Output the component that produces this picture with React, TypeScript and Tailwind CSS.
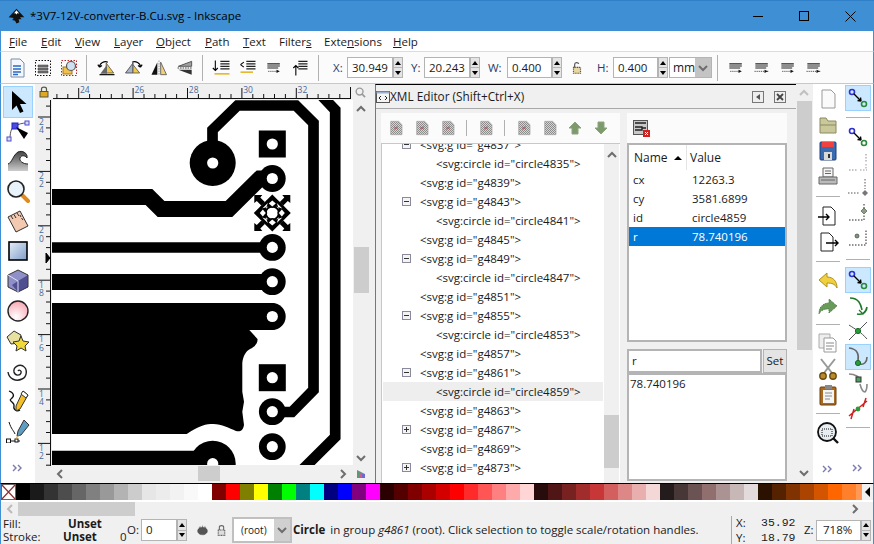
import type { ReactNode } from "react";

function Ico({ children, size = 24 }: { children: ReactNode; size?: number }) {
  return (
    <svg width={size} height={size} viewBox="0 0 24 24" fill="none" className="shrink-0">
      {children}
    </svg>
  );
}

function Sep() {
  return <div className="mx-[5px] h-[26px] w-px shrink-0 bg-[#b0b0b0]" />;
}

function HSep({ cls = "my-[6px]" }: { cls?: string }) {
  return <div className={`${cls} h-px w-[24px] shrink-0 bg-[#b0b0b0]`} />;
}

function Spin({ h = "h-[21px]" }: { h?: string }) {
  return (
    <div className={`flex ${h} w-[10px] shrink-0 flex-col border border-[#b4b4b4] bg-[#e4e4e4]`}>
      <div className="flex flex-1 items-center justify-center border-b border-[#b4b4b4]">
        <div className="h-0 w-0 border-x-[3px] border-b-[4px] border-x-transparent border-b-black" />
      </div>
      <div className="flex flex-1 items-center justify-center">
        <div className="h-0 w-0 border-x-[3px] border-t-[4px] border-x-transparent border-t-black" />
      </div>
    </div>
  );
}

function Field({ label, value, labelCls, inputCls }: { label: string; value: string; labelCls: string; inputCls: string }) {
  return (
    <div className="flex items-center">
      <span className={`${labelCls} text-[#2b3a67]`}>{label}</span>
      <div className={`${inputCls} flex h-[21px] items-center border border-[#b4b4b4] bg-white pl-[4px]`}>{value}</div>
      <Spin />
    </div>
  );
}

function Chevron({ dir, color = "#6e6e6e" }: { dir: "up" | "down" | "left" | "right"; color?: string }) {
  const d = {
    up: "M1 7 L5 3 L9 7",
    down: "M1 3 L5 7 L9 3",
    left: "M7 1 L3 5 L7 9",
    right: "M3 1 L7 5 L3 9",
  }[dir];
  return (
    <svg width="10" height="10" viewBox="0 0 10 10" className="shrink-0">
      <path d={d} fill="none" stroke={color} strokeWidth="2" />
    </svg>
  );
}

function More() {
  return (
    <svg width="12" height="8" viewBox="0 0 12 8">
      <path d="M1 1 L4 4 L1 7 M6 1 L9 4 L6 7" fill="none" stroke="#7a7ab0" strokeWidth="1.4" />
    </svg>
  );
}

/* ---- toolbox drawings ---- */
const toolIcons: ReactNode[] = [
  <path key="a" d="M6 1 V20 L10.5 15.5 L14 23 L17.5 21.5 L14 14 L20.5 14 Z" fill="#000" />,
  <g key="b">
    <path d="M4 20 C4 12 6 8 9 7 C13 5 16 4 21 4" fill="none" stroke="#555" />
    <rect x="6" y="4" width="6" height="6" fill="#4a4ae0" stroke="#2222c0" />
    <rect x="19" y="2" width="4" height="4" fill="#ddd" stroke="#4a4ae0" />
    <rect x="1" y="18" width="4" height="4" fill="#ddd" stroke="#4a4ae0" />
    <path d="M10 8 L22 14 L18 20 Z" fill="#000" />
  </g>,
  <g key="c">
    <defs>
      <linearGradient id="twk" x1="0" y1="0" x2="0" y2="1">
        <stop offset="0" stopColor="#444" />
        <stop offset="1" stopColor="#ccc" />
      </linearGradient>
    </defs>
    <path d="M2 22 V15 C6 14 7 6 12 3 C16 1 22 4 21 9 C19 6 15 6 14 9 C13 12 17 15 22 15 V22 Z" fill="url(#twk)" />
    <path d="M2 15 C6 14 7 6 12 3 C16 1 22 4 21 9 C19 6 15 6 14 9 C13 12 17 15 22 15" fill="none" stroke="#222" />
  </g>,
  <g key="d">
    <path d="M15 15 L22 22" stroke="#e08a1c" strokeWidth="4" strokeLinecap="round" />
    <circle cx="10" cy="10" r="8" fill="#e8f2fa" stroke="#222" strokeWidth="1.6" />
  </g>,
  <g key="e">
    <path d="M2 8 L14 2 L22 17 L10 23 Z" fill="#f3c9b0" stroke="#333" />
    <path d="M5 7 L7 10 M8 5.5 L10 9 M11 4 L13 7 M14 6 L15 8 M15.5 9 L17 11" stroke="#333" />
  </g>,
  <g key="f">
    <defs>
      <linearGradient id="rct" x1="0" y1="0" x2="1" y2="1">
        <stop offset="0" stopColor="#e6eef8" />
        <stop offset="1" stopColor="#7f9dc8" />
      </linearGradient>
    </defs>
    <rect x="3" y="3" width="18" height="18" fill="url(#rct)" stroke="#000" strokeWidth="1.6" />
  </g>,
  <g key="g">
    <path d="M12 1 L22 6 V18 L12 23 L2 18 V6 Z" fill="#9090c8" stroke="#333" />
    <path d="M12 12 L22 6 V18 L12 23 L6 16 Z" fill="#33337a" opacity=".7" />
    <path d="M2 6 L12 12 V23" fill="none" stroke="#dfdff5" />
  </g>,
  <g key="h">
    <defs>
      <radialGradient id="crc" cx="0.4" cy="0.8" r="0.8">
        <stop offset="0" stopColor="#fff" />
        <stop offset="1" stopColor="#f7a8b4" />
      </radialGradient>
    </defs>
    <circle cx="12" cy="12" r="10" fill="url(#crc)" stroke="#222" strokeWidth="1.4" />
  </g>,
  <g key="i">
    <path d="M1 8 L8 2 L15 6 L13 14 L5 15 Z" fill="#e8e0a0" stroke="#333" />
    <path d="M15 7 L17 12 L23 13 L19 17 L20 22 L15 19 L10 22 L11 17 L7 13 L13 12 Z" fill="#f0d838" stroke="#333" />
  </g>,
  <path key="j" d="M12 12 C13 10 16 12 15 14 C14 17 9 17 8 13 C7 8 13 5 17 7 C22 10 21 18 16 20 C10 23 3 20 2 13" fill="none" stroke="#222" strokeWidth="1.4" />,
  <g key="k">
    <path d="M3 2 C8 4 9 7 5 10 C2 12 9 13 8 17 C7 21 11 23 14 21" fill="none" stroke="#111" strokeWidth="1.3" />
    <path d="M17 2 L22 6 L14 20 L10 22 L10 17 Z" fill="#f2bf2a" stroke="#333" />
    <path d="M17 2 L22 6 L20 9 L15 5 Z" fill="#fff" stroke="#333" />
  </g>,
  <g key="l">
    <path d="M3 3 C5 10 8 12 9 15" fill="none" stroke="#111" />
    <path d="M1 22 H14" stroke="#111" />
    <rect x="0.5" y="20" width="4" height="4" fill="#fff" stroke="#111" />
    <rect x="9" y="20" width="3" height="3" fill="#fff" stroke="#111" />
    <path d="M18 1 L23 6 L15 16 L11 17 L12 12 Z" fill="#5f9cc4" stroke="#333" />
    <path d="M11 17 L9 21 L14 16 Z" fill="#d9a440" />
  </g>,
];

/* ---- top toolbar drawings ---- */
const Doc = (
  <Ico>
    <path d="M6 3 H15 L19 7 V21 H6 Z" fill="#f4f7fb" stroke="#7a8ea8" />
    <path d="M8 10 H16 M8 13 H16 M8 16 H16 M8 18.5 H13" stroke="#2a6ac8" strokeWidth="1.4" />
  </Ico>
);
const Layers = (
  <Ico>
    <rect x="4.5" y="4.5" width="15" height="15" fill="none" stroke="#111" strokeDasharray="1.5 1.5" />
    <path d="M7 9 H17 V11 H7 Z M7 12 H17 V14 H7 Z M7 15 H17 V17 H7 Z" fill="#777" stroke="#333" strokeWidth=".5" />
  </Ico>
);
const ZoomPage = (
  <Ico>
    <rect x="4.5" y="4.5" width="15" height="15" fill="none" stroke="#c02020" strokeDasharray="1.5 1.5" />
    <rect x="6" y="11" width="9" height="7" fill="#f2c04a" stroke="#a87818" />
    <circle cx="14" cy="10" r="4.5" fill="#cfe0f2" stroke="#555" strokeWidth="1.2" />
  </Ico>
);
const Rot1 = (
  <Ico>
    <path d="M11 6 V18 H20 Z" fill="#f0c84a" stroke="#555" />
    <path d="M4 19 H12 L12 8 Z" fill="#666" />
    <path d="M3 11 C3 6 9 3 13 5 M3 11 L1 8 M3 11 L6 9" fill="none" stroke="#000" strokeWidth="1.4" />
    <path d="M3 20 H21" stroke="#000" strokeWidth="1.4" />
  </Ico>
);
const Rot2 = (
  <Ico>
    <path d="M12 6 V18 H3 Z" fill="#a8b4c8" stroke="#444" />
    <path d="M12 18 H20 L12 8 Z" fill="#f0c84a" stroke="#555" />
    <path d="M21 11 C21 6 15 3 11 5 M21 11 L23 8 M21 11 L18 9" fill="none" stroke="#000" strokeWidth="1.4" />
  </Ico>
);
const FlipH = (
  <Ico>
    <path d="M10 5 V20 H3 Z" fill="#111" />
    <path d="M14 5 V20 H21 Z" fill="#f0d07a" stroke="#555" />
    <path d="M12 3 V21" stroke="#888" strokeDasharray="2 1" />
  </Ico>
);
const FlipV = (
  <Ico>
    <path d="M4 10 L20 4 V10 Z" fill="#a0a0a0" stroke="#444" />
    <path d="M4 14 L20 20 V14 Z" fill="#333" />
    <path d="M3 12 H21" stroke="#222" strokeDasharray="2 1" />
  </Ico>
);
const Stack = ({ arrow, yellow }: { arrow: string; yellow?: string }) => (
  <Ico>
    <path d="M10 4 H21 M10 7 H21 M10 10 H21 M10 13 H21" stroke="#222" strokeWidth="1.6" />
    <path d={arrow} fill="none" stroke="#000" strokeWidth="1.3" />
    {yellow ? <path d={yellow} stroke="#e8b830" strokeWidth="2" /> : null}
  </Ico>
);
const RowIcon = ({ dots }: { dots?: boolean }) => (
  <Ico>
    <path d="M4 7 H19 M4 9.5 H19 M4 12 H17" stroke="#222" strokeWidth="1.3" />
    <path d={dots ? "M3 16 H20" : "M5 16 H17"} stroke="#333" strokeDasharray="1.5 1" />
    <path d="M15 14 L19 16 L15 18 Z" fill="#111" />
  </Ico>
);

function Snap({ v }: { v: number }) {
  const base = (
    <>
      <circle cx="6" cy="6" r="2.5" fill="none" stroke="#3030d0" strokeWidth="1.6" />
      <path d="M8 8 L15 15 M15 15 L11.5 14.5 M15 15 L14.5 11.5" stroke="#000" strokeWidth="1.4" fill="none" />
      <circle cx="18" cy="18" r="2.5" fill="none" stroke="#2a8a3a" strokeWidth="1.6" />
    </>
  );
  if (v === 0) return <Ico>{base}</Ico>;
  if (v === 1)
    return (
      <Ico>
        <path d="M3 20 H12 M20 4 V12" stroke="#888" strokeDasharray="1.5 1.5" />
        <path d="M14 20 H21 M20 14 V20" stroke="#999" strokeDasharray="1.5 1.5" />
      </Ico>
    );
  if (v === 2)
    return (
      <Ico>
        <path d="M2 18 H14 M19 4 V14" stroke="#555" strokeDasharray="1.5 1.5" />
        <path d="M19 15 L22 18 L19 21 L16 18 Z" fill="#777" />
      </Ico>
    );
  if (v === 3)
    return (
      <Ico>
        <path d="M3 20 H18 V14 M18 4 V10" stroke="#222" strokeDasharray="1.5 1.5" />
        <path d="M18 8 L21 11 L18 14 L15 11 Z" fill="#8aa07a" stroke="#444" strokeWidth=".6" />
      </Ico>
    );
  if (v === 4)
    return (
      <Ico>
        <path d="M3 20 H20 V4" stroke="#222" strokeDasharray="1.5 1.5" />
        <circle cx="11" cy="11" r="2" fill="#7a9a7a" stroke="#333" strokeWidth=".6" />
      </Ico>
    );
  if (v === 5)
    return (
      <Ico>
        <path d="M4 4 C14 4 15 12 16 16" fill="none" stroke="#1f7a2a" strokeWidth="1.6" />
        <path d="M11 20 C16 21 20 19 21 13" fill="none" stroke="#1f7a2a" strokeWidth="1.6" />
        <path d="M13 16 L17 20 L21 15" fill="none" stroke="#1f7a2a" strokeWidth="1.2" />
      </Ico>
    );
  if (v === 6)
    return (
      <Ico>
        <path d="M3 21 L21 3 M3 6 C9 10 15 13 21 20" fill="none" stroke="#555" />
        <circle cx="12" cy="12" r="2.6" fill="#2a9a3a" stroke="#156a20" />
      </Ico>
    );
  if (v === 7)
    return (
      <Ico>
        <path d="M3 3 C12 4 13 10 12 16 M14 19 C18 20 21 17 21 12" fill="none" stroke="#666" strokeWidth="1.6" />
        <circle cx="12" cy="18" r="2.6" fill="#2a9a3a" stroke="#156a20" />
      </Ico>
    );
  if (v === 8)
    return (
      <Ico>
        <path d="M3 3 C9 3 14 6 14 10 M14 13 C15 17 16 21 19 21 C21 19 21 16 21 13" fill="none" stroke="#888" strokeWidth="1.6" />
        <rect x="10" y="6" width="5" height="5" fill="#4fa060" stroke="#333" />
      </Ico>
    );
  return (
    <Ico>
      <path d="M3 20 L21 5 M5 23 L8 13 M17 11 L20 2" stroke="#d02020" strokeWidth="1.5" />
      <circle cx="12" cy="13" r="2.4" fill="#2a9a3a" />
    </Ico>
  );
}

const cmdIcons: Record<string, ReactNode> = {
  new: (
    <Ico>
      <path d="M6 3 H15 L19 7 V21 H6 Z" fill="#fafafa" stroke="#999" />
    </Ico>
  ),
  open: (
    <Ico>
      <path d="M4 8 V5 H10 L12 8 H20 V20 H4 Z" fill="#c8c89a" stroke="#8a8a60" />
      <path d="M4 12 H20" stroke="#8a8a60" />
    </Ico>
  ),
  save: (
    <Ico>
      <rect x="4" y="3" width="16" height="18" rx="1" fill="#3a6ab0" stroke="#1f3f78" />
      <rect x="6" y="3" width="12" height="5" fill="#f04040" />
      <rect x="8" y="13" width="8" height="8" fill="#d8d8d8" />
      <rect x="12" y="15" width="2" height="4" fill="#333" />
    </Ico>
  ),
  print: (
    <Ico>
      <path d="M7 3 H17 V12 H7 Z" fill="#f5f5f5" stroke="#666" />
      <path d="M9 6 H15 M9 8.5 H15" stroke="#666" />
      <path d="M3 12 H21 V19 H3 Z" fill="#bbb" stroke="#666" />
      <path d="M5 15 H19" stroke="#666" />
    </Ico>
  ),
  imp: (
    <Ico>
      <path d="M7 3 H15 L19 7 V21 H7 Z" fill="#fff" stroke="#222" />
      <path d="M2 13 H13 M10 10 L13 13 L10 16" fill="none" stroke="#000" strokeWidth="1.4" />
    </Ico>
  ),
  exp: (
    <Ico>
      <path d="M5 3 H13 L17 7 V21 H5 Z" fill="#fff" stroke="#222" />
      <path d="M10 13 H22 M19 10 L22 13 L19 16" fill="none" stroke="#000" strokeWidth="1.4" />
    </Ico>
  ),
  undo: (
    <Ico>
      <path d="M3 11 L11 4 V8 C17 8 21 12 21 19 C19 15 16 14 11 14 V18 Z" fill="#f0d040" stroke="#b09018" />
    </Ico>
  ),
  redo: (
    <Ico>
      <path d="M21 11 L13 4 V8 C7 8 3 12 3 19 C5 15 8 14 13 14 V18 Z" fill="#6a9a5a" stroke="#3a6a30" strokeDasharray="1 1" />
    </Ico>
  ),
  copy: (
    <Ico>
      <path d="M3 3 H14 V17 H3 Z" fill="#eee" stroke="#aaa" />
      <path d="M8 7 H17 L20 10 V21 H8 Z" fill="#fff" stroke="#999" />
      <path d="M10 12 H18 M10 15 H18 M10 18 H16" stroke="#888" />
    </Ico>
  ),
  cut: (
    <Ico>
      <path d="M5 2 L16 16 M19 2 L8 16" stroke="#999" strokeWidth="2" />
      <circle cx="7" cy="19" r="3.2" fill="#b98a28" stroke="#6a4a10" strokeWidth="1.4" />
      <circle cx="17" cy="19" r="3.2" fill="#b98a28" stroke="#6a4a10" strokeWidth="1.4" />
    </Ico>
  ),
  paste: (
    <Ico>
      <rect x="4" y="4" width="16" height="18" rx="1" fill="#a86a20" stroke="#6a4010" />
      <rect x="7" y="7" width="11" height="13" fill="#f5f5f5" />
      <rect x="9" y="2" width="7" height="4" fill="#888" />
      <path d="M9 10 H16 M9 13 H16 M9 16 H14" stroke="#888" />
    </Ico>
  ),
  zoomSel: (
    <Ico>
      <circle cx="11" cy="11" r="9" fill="#e8eef2" stroke="#111" strokeWidth="1.8" />
      <rect x="6" y="8" width="10" height="7" fill="none" stroke="#111" strokeDasharray="1 1" />
      <path d="M17 17 L22 22" stroke="#111" strokeWidth="2.4" />
    </Ico>
  ),
};

// greyed-out xml buttons are dithered in the original
function MiniDoc({ solid }: { solid?: boolean }) {
  return (
    <Ico size={16}>
      <defs>
        <pattern id="dith" width="3" height="3" patternUnits="userSpaceOnUse">
          <rect width="3" height="3" fill="#d4d4d4" />
          <rect width="1.5" height="1.5" fill="#8c8c8c" />
          <rect x="1.5" y="1.5" width="1.5" height="1.5" fill="#8c8c8c" />
        </pattern>
      </defs>
      <path d="M4 2 H16 L21 7 V22 H4 Z" fill="url(#dith)" stroke="#a0a0a0" />
      {solid ? null : <path d="M9 14 L15 10 M9 10 L15 14" stroke="#b04040" />}
    </Ico>
  );
}

function Arrow({ up }: { up?: boolean }) {
  return (
    <svg width="16" height="16" viewBox="0 0 16 16" className="shrink-0">
      <path d={up ? "M8 2 L14 8 H11 V14 H5 V8 H2 Z" : "M8 14 L14 8 H11 V2 H5 V8 H2 Z"} fill="#7d9a6e" stroke="#8aa57a" />
    </svg>
  );
}

function TreeRow({ label, depth, exp, selected }: { label: string; depth: number; exp?: "-" | "+"; selected?: boolean }) {
  return (
    <div className={`flex h-[19px] shrink-0 items-center ${selected ? "bg-[#eeeeee]" : ""}`}>
      <div className="flex w-[37px] shrink-0 justify-end pr-[9px]">
        {exp ? (
          <div className="flex h-[9px] w-[9px] items-center justify-center border border-[#8a8a9a] bg-[#f4f4f4]">
            <svg width="7" height="7" viewBox="0 0 7 7">
              <path d={exp === "-" ? "M1 3.5 H6" : "M1 3.5 H6 M3.5 1 V6"} stroke="#333" />
            </svg>
          </div>
        ) : null}
      </div>
      <span className={depth === 1 ? "pl-[16px]" : ""}>{label}</span>
    </div>
  );
}

const tree: { label: string; depth: number; exp?: "-" | "+"; selected?: boolean }[] = [
  { label: '<svg:g id="g4837">', depth: 0, exp: "-" },
  { label: '<svg:circle id="circle4835">', depth: 1 },
  { label: '<svg:g id="g4839">', depth: 0 },
  { label: '<svg:g id="g4843">', depth: 0, exp: "-" },
  { label: '<svg:circle id="circle4841">', depth: 1 },
  { label: '<svg:g id="g4845">', depth: 0 },
  { label: '<svg:g id="g4849">', depth: 0, exp: "-" },
  { label: '<svg:circle id="circle4847">', depth: 1 },
  { label: '<svg:g id="g4851">', depth: 0 },
  { label: '<svg:g id="g4855">', depth: 0, exp: "-" },
  { label: '<svg:circle id="circle4853">', depth: 1 },
  { label: '<svg:g id="g4857">', depth: 0 },
  { label: '<svg:g id="g4861">', depth: 0, exp: "-" },
  { label: '<svg:circle id="circle4859">', depth: 1, selected: true },
  { label: '<svg:g id="g4863">', depth: 0 },
  { label: '<svg:g id="g4867">', depth: 0, exp: "+" },
  { label: '<svg:g id="g4869">', depth: 0 },
  { label: '<svg:g id="g4873">', depth: 0, exp: "+" },
];

const attrs = [
  { k: "cx", v: "12263.3" },
  { k: "cy", v: "3581.6899" },
  { k: "id", v: "circle4859" },
  { k: "r", v: "78.740196", sel: true },
];

const menus = [
  { pre: "", u: "F", post: "ile", w: "w-[32px]" },
  { pre: "", u: "E", post: "dit", w: "w-[34px]" },
  { pre: "", u: "V", post: "iew", w: "w-[39px]" },
  { pre: "", u: "L", post: "ayer", w: "w-[42px]" },
  { pre: "", u: "O", post: "bject", w: "w-[49px]" },
  { pre: "", u: "P", post: "ath", w: "w-[38px]" },
  { pre: "", u: "T", post: "ext", w: "w-[36px]" },
  { pre: "Filter", u: "s", post: "", w: "w-[45px]" },
  { pre: "Exte", u: "n", post: "sions", w: "w-[69px]" },
  { pre: "", u: "H", post: "elp", w: "w-[30px]" },
];

const palette = [
  "#000000", "#1a1a1a", "#333333", "#4d4d4d", "#666666", "#808080", "#999999", "#b3b3b3", "#cccccc", "#e6e6e6", "#ececec", "#f2f2f2", "#f9f9f9", "#ffffff",
  "#800000", "#ff0000", "#808000", "#ffff00", "#008000", "#00ff00", "#008080", "#00ffff", "#000080", "#0000ff", "#800080", "#ff00ff",
  "#2b0000", "#550000", "#800000", "#aa0000", "#d40000", "#ff0000", "#ff2a2a", "#ff5555", "#ff8080", "#ffaaaa", "#ffd5d5",
  "#280b0b", "#501616", "#782121", "#a02c2c", "#c83737", "#d35f5f", "#de8787", "#e9afaf", "#f4d7d7",
  "#241c1c", "#483737", "#6c5353", "#916f6f", "#ac9393", "#c8b7b7", "#e3dbdb",
  "#2b1100", "#552200", "#803300", "#aa4400", "#d45500", "#ff6600", "#ff7f2a", "#ff9955",
];

function Pad({ x, y, square }: { x: number; y: number; square?: boolean }) {
  return (
    <g>
      {square ? <rect x={x - 13.5} y={y - 13.5} width="27" height="27" fill="#000" /> : <circle cx={x} cy={y} r="13.4" fill="#000" />}
      <circle cx={x} cy={y} r="5.6" fill="#fff" />
    </g>
  );
}

function Handles() {
  return (
    <g transform="translate(272.3 213)">
      {[0, 90, 180, 270].map((r) => (
        <g key={r} transform={`rotate(${r})`}>
          <path d="M0 -18.5 L7 -11.5 L4 -11 L5 -7 L0 -5 L-5 -7 L-4 -11 L-7 -11.5 Z" fill="#000" />
          <path d="M0 -12.5 L3.5 -9.5 L0 -6.5 L-3.5 -9.5 Z" fill="#fff" />
          <path d="M-18 -18 H-10 L-12 -15.5 L-7.5 -11 L-11 -7.5 L-15.5 -12 L-18 -10 Z" fill="#000" />
          <path d="M-10 -4.5 L-4.5 -10 L-6.5 -4 L-4 -6.5 Z" fill="#fff" />
        </g>
      ))}
    </g>
  );
}

function PcbCanvas() {
  return (
    <svg width="301" height="365" viewBox="52 100 301 365" className="block bg-white">
      <g fill="none" stroke="#000" strokeLinejoin="miter">
        <path d="M212.5 163 V130 L237.5 105.5 H296 L313.5 123 V390 L292 412 H272" strokeWidth="10.7" />
        <path d="M320 94 L335.2 110 V437 L298 474" strokeWidth="10.7" />
        <path d="M52 197 H149 L161 209 H229 L260 178.4 H272" strokeWidth="16" />
        <path d="M52 247.5 H272" strokeWidth="10.7" />
        <path d="M52 282 H272" strokeWidth="16" />
        <path d="M52 458 H212" strokeWidth="14.5" />
      </g>
      <path d="M52 303 H272 A13.6 13.6 0 0 1 272 330 H249.3 L257.5 339 C258 344 254 347 250 349 C246 351 243 356 242.3 363 V391.7 L244 401.7 L242.3 411.7 L244 425 C243 431 240 432 236 431 C229 428 222 424 213.3 424 C206 424 200 425 186.7 434 H52 Z" fill="#000" />
      <circle cx="212.7" cy="163" r="23" fill="#000" />
      <circle cx="212.7" cy="163" r="5.6" fill="#fff" />
      <circle cx="212.7" cy="463.7" r="23" fill="#000" />
      <circle cx="212.7" cy="463.7" r="5.6" fill="#fff" />
      <Pad x={272.3} y={144} square />
      <Pad x={272.3} y={178.5} />
      <Pad x={272.3} y={213} />
      <Pad x={272.3} y={247.4} />
      <Pad x={272.3} y={281.7} />
      <Pad x={272.3} y={316.5} />
      <Pad x={272.3} y={377.7} square />
      <Pad x={272.3} y={411.7} />
      <Pad x={272.3} y={446.7} />
      <Handles />
    </svg>
  );
}

function TopRuler() {
  const ticks: ReactNode[] = [];
  for (let i = -2; i < 29; i++) {
    const x = 78.7 + (i * 54.4) / 5;
    if (x < 53 || x > 350) continue;
    const major = i % 5 === 0;
    ticks.push(<path key={i} d={`M${x.toFixed(1)} ${major ? 3 : 9} V13`} stroke="#111" />);
  }
  return (
    <svg width="301" height="15" viewBox="52 0 301 15" className="block shrink-0">
      {ticks}
      <path d="M53 13.5 H350" stroke="#111" />
      {["24", "26", "28", "30", "32"].map((t, i) => (
        <text key={t} x={80 + i * 54.4} y="8" fontSize="8.5" fill="#4a6a9a" fontFamily="'Open Sans', sans-serif">
          {t}
        </text>
      ))}
      <path d="M350.5 2 V14" stroke="#111" />
    </svg>
  );
}

function LeftRuler() {
  const ticks: ReactNode[] = [];
  for (let i = -1; i < 33; i++) {
    const y = 117 + (i * 54.4) / 5 - 100;
    if (y < 0 || y > 366) continue;
    const major = i % 5 === 0;
    ticks.push(<path key={i} d={`M${major ? 3 : 11} ${y.toFixed(1)} H15`} stroke="#111" />);
  }
  return (
    <svg width="17" height="366" viewBox="0 0 17 366" className="block shrink-0">
      {ticks}
      <path d="M15.5 0 V366" stroke="#111" />
      {["24", "22", "20", "18", "16", "14", "12"].map((t, i) => (
        <text key={t} fontSize="8.5" fill="#4a6a9a" fontFamily="'Open Sans', sans-serif">
          <tspan x="4" y={24.5 + i * 54.4}>{t[0]}</tspan>
          <tspan x="4" y={33 + i * 54.4}>{t[1]}</tspan>
        </text>
      ))}
      <path d="M11 153 L15 158 L11 163 Z" fill="#000" stroke="#000" />
    </svg>
  );
}

export default function App() {
  return (
    <div className="flex h-[544px] w-[874px] flex-col overflow-hidden bg-[#f0f0f0] font-['Open_Sans',sans-serif] text-[11.5px] leading-none text-[#1a1a1a]">
      {/* title bar */}
      <div className="flex h-[31px] shrink-0 items-center border-t border-[#2e7fc8] bg-[#3f8fd4] pl-[8px] text-[11.5px] text-black">
        <svg width="17" height="17" viewBox="0 0 24 24" className="mr-[5px] shrink-0">
          <path d="M12 1 L23 13 L17 13 L19 16 L15 16 L16 20 L12 22 L10 18 L6 17 L8 14 L1 13 Z" fill="#111" />
          <path d="M12 3 L16 8 L13.5 7 L12 9 L10 7 L8 8 Z" fill="#fff" />
        </svg>
        <span>*3V7-12V-converter-B.Cu.svg - Inkscape</span>
        <div className="ml-auto flex items-center pr-px">
          <div className="flex w-[46px] justify-center">
            <div className="h-px w-[10px] bg-black" />
          </div>
          <div className="flex w-[46px] justify-center">
            <div className="h-[10px] w-[10px] border border-black" />
          </div>
          <div className="flex w-[46px] justify-center">
            <svg width="11" height="11" viewBox="0 0 11 11">
              <path d="M0.5 0.5 L10.5 10.5 M10.5 0.5 L0.5 10.5" stroke="#000" />
            </svg>
          </div>
        </div>
      </div>

      {/* menu bar */}
      <div className="flex h-[21px] shrink-0 items-center border-x border-b border-x-[#3f8fd4] border-b-[#dcdcdc] bg-white pl-[8px] pt-[2px]">
        {menus.map((m) => (
          <div key={m.u + m.w} className={`${m.w} shrink-0`}>
            {m.pre}
            <span className="underline">{m.u}</span>
            {m.post}
          </div>
        ))}
      </div>

      {/* command bar */}
      <div className="flex h-[32px] shrink-0 items-center border-x border-b border-x-[#3f8fd4] border-b-[#c8c8c8] bg-[#fbfbfb]">
        <div className="flex w-[80px] shrink-0 gap-[2px] pl-[4px]">
          {Doc}
          {Layers}
          {ZoomPage}
        </div>
        <Sep />
        <div className="ml-[3px] flex w-[102px] shrink-0 gap-[6px] px-[2px] [&>svg]:size-[20px]">
          {Rot1}
          {Rot2}
          {FlipH}
          {FlipV}
        </div>
        <Sep />
        <div className="ml-[2px] flex w-[102px] shrink-0 gap-[6px] px-[2px] [&>svg]:size-[20px]">
          <Stack arrow="M4 3 V15 M1 12 L4 15 L7 12" yellow="M3 19 H21" />
          <Stack arrow="M3 8 L7 5 M3 8 L7 11" yellow="M3 17 H18" />
          <RowIcon />
          <Stack arrow="M7 21 V9 M4 12 L7 9 L10 12" />
        </div>
        <div className="pl-px"><Sep /></div>
        <Field label="X:" value="30.949" labelCls="w-[23px] pl-[9px]" inputCls="w-[46px]" />
        <Field label="Y:" value="20.243" labelCls="w-[21px] pl-[8px]" inputCls="w-[46px]" />
        <Field label="W:" value="0.400" labelCls="w-[27px] pl-[8px]" inputCls="w-[45px]" />
        <div className="flex w-[30px] shrink-0 justify-center">
          <Ico size={14}>
            <rect x="6" y="11" width="12" height="10" fill="#e8d8a0" stroke="#555" strokeWidth="2" strokeDasharray="2 1" />
            <path d="M8 11 V6 C8 2 14 2 15 5" fill="none" stroke="#555" strokeWidth="2" />
          </Ico>
        </div>
        <Field label="H:" value="0.400" labelCls="w-[21px] pl-[5px]" inputCls="w-[45px]" />
        <div className="ml-px flex h-[21px] w-[43px] shrink-0 items-center border border-[#b4b4b4] bg-white pl-[3px] text-[12px]">
          mm
          <div className="ml-auto flex h-full w-[17px] items-center justify-center bg-[#c4c4c4]">
            <Chevron dir="down" />
          </div>
        </div>
        <Sep />
        <div className="ml-px flex w-[102px] shrink-0 gap-[6px] px-[2px] [&>svg]:size-[20px]">
          <RowIcon />
          <RowIcon dots />
          <RowIcon />
          <RowIcon dots />
        </div>
      </div>

      {/* main area */}
      <div className="flex h-[399px] shrink-0 border-x border-x-[#3f8fd4]">
        {/* toolbox */}
        <div className="flex w-[34px] shrink-0 flex-col items-center bg-white pt-[2px]">
          {toolIcons.map((icon, i) => (
            <div
              key={i}
              className={
                i === 0
                  ? "mb-[-2px] flex h-[32px] w-[30px] shrink-0 items-center justify-center border border-[#99d1ff] bg-[#cce8ff]"
                  : "flex h-[30px] w-[30px] shrink-0 items-center justify-center"
              }
            >
              <Ico>{icon}</Ico>
            </div>
          ))}
          <div className="mt-[14px] flex h-[16px] items-center">
            <More />
          </div>
        </div>

        {/* canvas with rulers and scrollbars */}
        <div className="flex w-[334px] shrink-0 flex-col">
          <div className="flex h-[16px] shrink-0 items-center">
            <div className="flex w-[17px] shrink-0 items-center justify-center">
              <Ico size={12}>
                <rect x="4" y="11" width="16" height="11" fill="#e0a820" stroke="#554" strokeWidth="2" />
                <path d="M7 11 V6 C7 1 17 1 17 6 V11" fill="none" stroke="#554" strokeWidth="2.4" />
              </Ico>
            </div>
            <TopRuler />
            <div className="flex w-[15px] shrink-0 justify-center">
              <Ico size={11}>
                <circle cx="10" cy="10" r="7.5" fill="none" stroke="#9a9a9a" strokeWidth="3" />
                <path d="M15 15 L22 22" stroke="#9a9a9a" strokeWidth="3.5" />
              </Ico>
            </div>
          </div>
          <div className="flex h-[366px] shrink-0">
            <LeftRuler />
            <div className="h-[365px] w-[301px] shrink-0 overflow-hidden">
              <PcbCanvas />
            </div>
            <div className="flex w-[16px] shrink-0 flex-col items-center">
              <div className="mt-[4px] flex h-[10px] items-center">
                <Chevron dir="up" />
              </div>
              <div className="mt-[133px] h-[46px] w-[15px] bg-[#cdcdcd]" />
              <div className="mt-[160px]">
                <Chevron dir="down" />
              </div>
            </div>
          </div>
          <div className="flex h-[15px] shrink-0 items-center">
            <div className="w-[17px] shrink-0" />
            <div className="flex h-full w-[301px] shrink-0 items-center bg-[#f0f0f0] pl-[3px]">
              <Chevron dir="left" />
              <div className="ml-[133px] h-full w-[22px] bg-[#cdcdcd]" />
              <div className="ml-[118px]">
                <Chevron dir="right" />
              </div>
            </div>
            <div className="flex w-[16px] justify-center">
              <svg width="10" height="10" viewBox="0 0 10 10">
                <path d="M1 1 L9 5 L9 9 L1 9 Z" fill="#5a9a7a" />
                <path d="M3 3 L5 4 L5 9 L3 9 Z" fill="#d05a8a" />
                <path d="M6 5 H9 V9 H6 Z" fill="#6a6ad0" />
              </svg>
            </div>
          </div>
        </div>

        {/* dock */}
        <div className="ml-[6px] flex w-[421px] shrink-0 flex-col border-l border-t border-l-[#777] border-t-black">
          <div className="flex h-[24px] shrink-0 items-center border-b border-[#a8a8a8] text-[11.8px]">
            <svg width="14" height="14" viewBox="0 0 14 14" className="shrink-0">
              <rect x="0.5" y="1.5" width="13" height="11" fill="#f4f4f4" stroke="#555" />
              <rect x="0.5" y="1.5" width="13" height="2" fill="#9ab0c8" />
              <path d="M5 6 L3 8 L5 10 M9 6 L11 8 L9 10" fill="none" stroke="#222" />
            </svg>
            <span>XML Editor (Shift+Ctrl+X)</span>
            <div className="ml-auto flex items-center gap-[10px] pr-[10px]">
              <div className="box-content flex h-[10px] w-[10px] items-center justify-center border border-[#777] bg-[#eee]">
                <div className="h-0 w-0 border-y-[3px] border-r-[4px] border-y-transparent border-r-[#555]" />
              </div>
              <div className="box-content flex h-[10px] w-[10px] items-center justify-center border border-[#777] bg-[#eee]">
                <svg width="8" height="8" viewBox="0 0 8 8">
                  <path d="M1 1 L7 7 M7 1 L1 7" stroke="#444" strokeWidth="1.8" />
                </svg>
              </div>
            </div>
          </div>

          <div className="flex min-h-0 flex-1 pl-[5px] pt-[4px]">
            {/* node tree */}
            <div className="flex w-[239px] shrink-0 flex-col">
              <div className="flex h-[30px] shrink-0 items-center bg-[#fbfbfb] pl-[7px]">
                <MiniDoc />
                <div className="ml-[10px]"><MiniDoc /></div>
                <div className="ml-[10px]"><MiniDoc /></div>
                <div className="ml-[10px] h-[16px] w-px bg-[#b0b0b0]" />
                <div className="ml-[11px]"><MiniDoc /></div>
                <div className="ml-[10px] h-[16px] w-px bg-[#b0b0b0]" />
                <div className="ml-[11px]"><MiniDoc /></div>
                <div className="ml-[10px]"><MiniDoc solid /></div>
                <div className="ml-[9px]"><Arrow up /></div>
                <div className="ml-[10px]"><Arrow /></div>
              </div>
              <div className="flex min-h-0 flex-1 overflow-hidden border-l border-t border-[#c8c8c8] bg-white">
                <div className="ml-px mt-[-9px] flex w-[220px] shrink-0 flex-col">
                  {tree.map((r) => (
                    <TreeRow key={r.label} {...r} />
                  ))}
                </div>
                <div className="ml-px flex w-[15px] shrink-0 flex-col items-center bg-[#f0f0f0]">
                  <div className="mt-[6px]">
                    <Chevron dir="up" />
                  </div>
                  <div className="mt-[255px] h-[53px] w-[15px] bg-[#cdcdcd]" />
                </div>
              </div>
            </div>

            {/* attribute panel */}
            <div className="ml-[7px] flex w-[160px] shrink-0 flex-col">
              <div className="flex h-[30px] shrink-0 items-center bg-[#fbfbfb] pl-[6px]">
                <svg width="17" height="17" viewBox="0 0 17 17">
                  <rect x="0.5" y="0.5" width="14" height="14" fill="#c8c8c8" stroke="#555" />
                  <path d="M2 3 H13 M2 7 H9 V10 H2 M9 8 H13" fill="none" stroke="#222" strokeWidth="1.4" />
                  <rect x="10" y="10" width="7" height="7" fill="#d02020" />
                  <path d="M12 12 L15 15 M15 12 L12 15" stroke="#fff" />
                </svg>
              </div>
              <div className="flex h-[199px] shrink-0 flex-col border-2 border-[#b4b4b4] bg-white">
                <div className="flex h-[25px] shrink-0 items-center text-[12px]">
                  <div className="flex h-full w-[58px] shrink-0 items-center border-r border-[#e4e4e4] pl-[5px]">
                    Name
                    <div className="ml-[6px] h-0 w-0 border-x-[4px] border-b-[4px] border-x-transparent border-b-black" />
                  </div>
                  <div className="pl-[3px]">Value</div>
                </div>
                {attrs.map((a) => (
                  <div key={a.k} className={`flex h-[19px] shrink-0 items-center pl-[4px] ${a.sel ? "bg-[#0078d7] text-white" : ""}`}>
                    <div className="w-[59px] shrink-0">{a.k}</div>
                    {a.v}
                  </div>
                ))}
              </div>
              <div className="mt-[7px] flex h-[24px] shrink-0">
                <div className="flex w-[135px] shrink-0 items-center border-2 border-[#b4b4b4] bg-white pl-[3px]">r</div>
                <div className="ml-px flex w-[24px] shrink-0 items-center justify-center border border-[#b4b4b4] bg-[#e4e4e4]">Set</div>
              </div>
              <div className="h-[108px] shrink-0 border-2 border-[#b4b4b4] bg-white pl-px pt-[3px]">78.740196</div>
            </div>
          </div>
        </div>

        {/* dock scrollbar */}
        <div className="flex w-[16px] shrink-0 flex-col items-center">
          <div className="mt-[4px] h-[10px]">
            <Chevron dir="up" color="#c0c0c0" />
          </div>
          <div className="mt-[3px] h-[249px] w-[15px] bg-[#cdcdcd]" />
          <div className="mt-[118px]">
            <Chevron dir="down" />
          </div>
        </div>

        {/* right toolbars */}
        <div className="ml-px flex flex-1 bg-white">
          <div className="flex w-[30px] shrink-0 flex-col items-center pt-[2px] [&>div.c]:flex [&>div.c]:h-[26px] [&>div.c]:items-center">
            <div className="c">{cmdIcons.new}</div>
            <div className="c">{cmdIcons.open}</div>
            <div className="c">{cmdIcons.save}</div>
            <div className="c">{cmdIcons.print}</div>
            <HSep />
            <div className="c">{cmdIcons.imp}</div>
            <div className="c">{cmdIcons.exp}</div>
            <HSep />
            <div className="c">{cmdIcons.undo}</div>
            <div className="c">{cmdIcons.redo}</div>
            <HSep cls="mb-[5px] mt-[4px]" />
            <div className="c">{cmdIcons.copy}</div>
            <div className="c">{cmdIcons.cut}</div>
            <div className="c">{cmdIcons.paste}</div>
            <HSep cls="mb-[6px] mt-[5px]" />
            <div className="c">{cmdIcons.zoomSel}</div>
            <div className="mt-[19px]">
              <More />
            </div>
          </div>
          <div className="flex w-[30px] shrink-0 flex-col items-center pt-px">
            <div className="flex h-[26px] w-[26px] items-center justify-center border border-[#99d1ff] bg-[#cce8ff]">
              <Snap v={0} />
            </div>
            <HSep />
            <div className="flex h-[25px] items-center"><Snap v={0} /></div>
            <div className="flex h-[25px] items-center"><Snap v={1} /></div>
            <div className="flex h-[25px] items-center"><Snap v={2} /></div>
            <div className="flex h-[25px] items-center"><Snap v={3} /></div>
            <div className="flex h-[25px] items-center"><Snap v={4} /></div>
            <HSep cls="mb-[7px] mt-[10px]" />
            <div className="flex h-[26px] w-[26px] items-center justify-center border border-[#99d1ff] bg-[#cce8ff]">
              <Snap v={0} />
            </div>
            <div className="flex h-[25px] items-center"><Snap v={5} /></div>
            <div className="flex h-[25px] items-center"><Snap v={6} /></div>
            <div className="mt-px flex h-[26px] w-[26px] items-center justify-center border border-[#99d1ff] bg-[#cce8ff]">
              <Snap v={7} />
            </div>
            <div className="flex h-[25px] items-center"><Snap v={8} /></div>
            <div className="flex h-[25px] items-center"><Snap v={9} /></div>
            <HSep cls="mt-[7px]" />
            <div className="mt-[36px]">
              <More />
            </div>
          </div>
        </div>
      </div>

      {/* palette */}
      <div className="flex h-[19px] shrink-0 flex-col border-x border-t border-x-[#3f8fd4] border-t-black bg-white">
        <div className="flex h-[16px] shrink-0 items-center bg-[#f0f0f0]">
          <svg width="15" height="16" viewBox="0 0 15 16" className="shrink-0">
            <rect x="0.5" y="0.5" width="14" height="15" fill="#fff" stroke="#666" />
            <path d="M0.5 0.5 L14.5 15.5 M14.5 0.5 L0.5 15.5" stroke="#8a3030" strokeWidth="1.2" />
          </svg>
          <div className="flex h-full w-[846px] shrink-0 overflow-hidden">
            {palette.map((c, i) => (
              <div key={i} className="h-full w-[14px] shrink-0" style={{ backgroundColor: c }} />
            ))}
          </div>
          <div className="ml-[3px] h-0 w-0 border-y-[5px] border-r-[5px] border-y-transparent border-r-black" />
        </div>
      </div>

      {/* horizontal scrollbar under palette */}
      <div className="flex h-[14px] shrink-0 items-center border-x border-x-[#3f8fd4] bg-[#f0f0f0] pl-[4px]">
        <Chevron dir="left" color="#bbb" />
        <div className="ml-[3px] h-full w-[117px] bg-[#cdcdcd]" />
        <div className="ml-auto pr-[13px]">
          <Chevron dir="right" />
        </div>
      </div>

      {/* status bar */}
      <div className="flex h-[28px] shrink-0 items-center border-x border-x-[#3f8fd4]">
        <div className="h-full w-[126px] shrink-0">
          <div className="flex h-[14px] items-center pl-[2px] pt-[2px]">
            <span className="w-[65px]">Fill:</span>
            <span className="font-bold">Unset</span>
          </div>
          <div className="flex h-[14px] items-center pl-[2px]">
            <span className="w-[60px]">Stroke:</span>
            <span className="w-[57px] font-bold">Unset</span>
            <span>0</span>
          </div>
        </div>
        <span className="w-[14px] shrink-0">O:</span>
        <div className="flex h-[22px] w-[36px] shrink-0 items-center border border-[#b4b4b4] bg-white pl-[4px]">0</div>
        <Spin h="h-[22px]" />
        <div className="flex w-[44px] shrink-0 justify-around pl-[6px]">
          <Ico size={13}>
            <ellipse cx="12" cy="13" rx="9" ry="7" fill="#555" stroke="#222" strokeDasharray="1.5 1" />
            <path d="M5 8 L8 4 M12 7 V3 M19 8 L16 4" stroke="#444" />
          </Ico>
          <Ico size={13}>
            <rect x="6" y="11" width="12" height="10" fill="#ddd" stroke="#666" strokeWidth="2" strokeDasharray="2 1" />
            <path d="M8 11 V6 C8 2 16 2 16 6 V11" fill="none" stroke="#666" strokeWidth="2" />
          </Ico>
        </div>
        <div className="ml-[1px] flex h-[26px] w-[60px] shrink-0 items-center border-2 border-[#c0c0c0] bg-white pl-[7px] text-[10px]">
          (root)
          <div className="ml-auto flex h-full w-[16px] items-center justify-center bg-[#d0d0d0]">
            <Chevron dir="down" />
          </div>
        </div>
        <div className="ml-px w-[438px] shrink-0 whitespace-nowrap">
          <span className="font-bold">Circle</span>
          <span className="pl-[5px]">in group </span>
          <em>g4861</em>
          <span> (root). Click selection to toggle scale/rotation handles.</span>
        </div>
        <div className="h-full w-px shrink-0 bg-[#a8a8a8]" />
        <div className="flex h-full w-[72px] shrink-0 flex-col justify-center gap-[3px] pl-[4px]">
          <div className="flex">
            <span className="w-[25px]">X:</span>
            <span className="font-['Liberation_Mono',monospace]">35.92</span>
          </div>
          <div className="flex">
            <span className="w-[25px]">Y:</span>
            <span className="font-['Liberation_Mono',monospace]">18.79</span>
          </div>
        </div>
        <span className="w-[12px] shrink-0">Z:</span>
        <div className="flex h-[21px] w-[45px] shrink-0 items-center border border-[#b4b4b4] bg-white pl-[6px]">718%</div>
        <Spin />
      </div>
    </div>
  );
}
